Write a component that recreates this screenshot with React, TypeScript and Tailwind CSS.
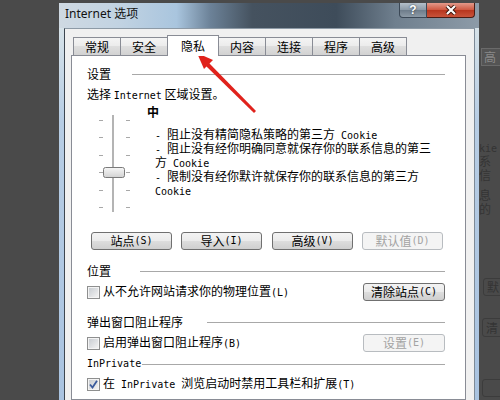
import React from "react";

const M = ({ children }: { children: React.ReactNode }) => (
  <span className="font-['DejaVu_Sans_Mono',monospace] text-[10px]">{children}</span>
);

const Btn = ({
  children,
  disabled,
  className,
}: {
  children: React.ReactNode;
  disabled?: boolean;
  className?: string;
}) => (
  <div
    className={`h-[18px] flex items-center justify-center rounded-[3px] border leading-[16px] ${
      disabled
        ? "border-[#b8bcc0] bg-[#f4f4f4] text-[#a3a3a3]"
        : "border-[#707070] bg-[linear-gradient(#f3f3f3_0%,#ebebeb_48%,#dddddd_52%,#cfcfcf_100%)] text-black"
    } ${className ?? ""}`}
  >
    {children}
  </div>
);

const Check = ({ checked }: { checked?: boolean }) => (
  <div className="w-[13px] h-[13px] border border-[#8e8f8f] bg-[#f4f4f4] p-[1px] shrink-0">
    <div className="relative w-full h-full bg-[linear-gradient(135deg,#c9cdd2,#f2f2f2)]">
      {checked && (
        <svg className="absolute inset-0" width="9" height="9" viewBox="0 0 9 9">
          <path d="M1 4.5 L3.5 7.5 L8 0.8" fill="none" stroke="#3a5a9c" strokeWidth="1.8" />
        </svg>
      )}
    </div>
  </div>
);

const Group = ({ label, lineClass }: { label: React.ReactNode; lineClass: string }) => (
  <div className="flex items-center h-[16px]">
    <span className="shrink-0">{label}</span>
    <div className={`flex-1 h-px bg-[#a8a8a8] ${lineClass}`} />
  </div>
);

const Tab = ({ label, first }: { label: string; first?: boolean }) => (
  <div
    className={`w-[48px] h-[18px] border border-b-0 border-[#898c95] bg-[linear-gradient(#f4f4f4_0%,#ececec_45%,#dedede_50%,#d2d2d2_100%)] flex items-center justify-center leading-[16px] ${
      first ? "" : "-ml-px"
    }`}
  >
    {label}
  </div>
);

const Slider = () => {
  const ticks = [16, 33, 51, 68, 86, 103];
  return (
    <svg width="34" height="112" viewBox="0 0 34 112" className="shrink-0 ml-[11px]">
      <rect x="14" y="11" width="2" height="97" fill="#b4b4b4" />
      <rect x="16" y="11" width="1" height="97" fill="#ffffff" />
      {ticks.map((t) => (
        <g key={t}>
          <rect x="1" y={t} width="4" height="1" fill="#a8a8a8" />
          <rect x="28" y={t} width="4" height="1" fill="#a8a8a8" />
        </g>
      ))}
      <defs>
        <linearGradient id="thumb" x1="0" y1="0" x2="0" y2="1">
          <stop offset="0" stopColor="#f7f7f7" />
          <stop offset="1" stopColor="#d2d2d2" />
        </linearGradient>
      </defs>
      <rect x="5.5" y="63.5" width="21" height="10" rx="2" fill="url(#thumb)" stroke="#7a7a7a" />
    </svg>
  );
};

export default function App() {
  return (
    <div className="relative w-[500px] h-[400px] overflow-hidden bg-[#4a4a4a] flex font-['Noto_Sans_CJK_SC',sans-serif] text-[12px] leading-[16px] text-black">
      <div className="w-[59px] shrink-0" />

      {/* Window */}
      <div className="w-[420px] shrink-0 mt-[3px] flex flex-col bg-[linear-gradient(#dfe8ea,#b7cde4_30%,#a9c3e0)]">
        {/* Title bar */}
        <div className="h-[25px] shrink-0 flex bg-[linear-gradient(to_right,#cfd9e2_0%,#c2d3e2_14%,#a9c5de_28%,#6c8298_36%,#45525f_46%,#3e4c5a_66%,#6f7f8e_80%,#8d9ba8_100%)]">
          <div className="pl-[6px] pt-[3px] h-[16px] font-['Noto_Sans','Noto_Sans_CJK_SC',sans-serif] text-[12px] text-[#111]">
            Internet 选项
          </div>
          <div className="ml-auto mr-[4px] flex h-[15px]">
            <div className="w-[28px] h-full rounded-bl-[4px] border border-t-0 border-[#3b4856] bg-[linear-gradient(#b4c0ca,#8b99a6_50%,#6e7d8b_52%,#8d9aa6)] flex items-center justify-center text-white font-bold text-[12px] leading-[12px] font-['Liberation_Sans',sans-serif] [text-shadow:0_0_2px_#1e2a36]">
              ?
            </div>
            <div className="w-[48px] h-full rounded-br-[4px] border border-t-0 border-l-0 border-[#4a1c14] bg-[linear-gradient(#e39a8a,#cf5a43_48%,#b8361e_52%,#c9533a)] flex items-center justify-center">
              <svg width="12" height="10" viewBox="0 0 12 10">
                <path d="M2 1 L10 9 M10 1 L2 9" stroke="#3a1208" strokeWidth="4" />
                <path d="M2 1 L10 9 M10 1 L2 9" stroke="#ffffff" strokeWidth="2.2" />
              </svg>
            </div>
          </div>
        </div>

        {/* Body row */}
        <div className="flex flex-1 min-h-0">
          <div className="w-[5px] shrink-0" />
          <div className="w-[411px] shrink-0 border-l border-t border-r border-l-[#3d4650] border-t-[#8d9aa6] border-r-[#7d8a97] bg-[#f0f0f0] pl-[6px] pt-[6px] flex flex-col">
            {/* Tabs */}
            <div className="flex items-end h-[20px] pl-[2px] shrink-0">
              <Tab label="常规" first />
              <Tab label="安全" />
              <div className="relative z-10 -ml-px -mb-px w-[52px] h-[21px] border border-b-0 border-[#898c95] bg-white flex items-center justify-center leading-[16px]">
                隐私
              </div>
              <Tab label="内容" />
              <Tab label="连接" />
              <Tab label="程序" />
              <Tab label="高级" />
            </div>

            {/* Panel */}
            <div className="w-[395px] flex-1 border border-[#898c95] bg-white pl-[15px] pr-[20px] pt-[10px] flex flex-col">
              <Group label="设置" lineClass="ml-[21px]" />
              <div className="mt-[4px] h-[16px]">
                选择 <M>Internet</M> 区域设置。
              </div>

              <div className="mt-[2px] h-[112px] flex">
                <Slider />
                <div className="ml-[15px] flex flex-col">
                  <div className="h-[16px] font-bold">中</div>
                  <div className="mt-[8px] ml-[8px] leading-[12px]">
                    <div>
                      <M>- </M>阻止没有精简隐私策略的第三方<M> Cookie</M>
                    </div>
                    <div>
                      <M>- </M>阻止没有经你明确同意就保存你的联系信息的第三
                    </div>
                    <div>
                      方<M> Cookie</M>
                    </div>
                    <div>
                      <M>- </M>限制没有经你默许就保存你的联系信息的第三方
                    </div>
                    <div>
                      <M>Cookie</M>
                    </div>
                  </div>
                </div>
              </div>

              <div className="mt-[16px] flex">
                <Btn className="ml-[4px] w-[81px]">
                  站点<M>(S)</M>
                </Btn>
                <Btn className="ml-[9px] w-[81px]">
                  导入<M>(I)</M>
                </Btn>
                <Btn className="ml-[10px] w-[81px]">
                  高级<M>(V)</M>
                </Btn>
                <Btn className="ml-[9px] w-[81px]" disabled>
                  默认值<M>(D)</M>
                </Btn>
              </div>

              <div className="mt-[13px]">
                <Group label="位置" lineClass="ml-[29px]" />
              </div>
              <div className="mt-[4px] h-[18px] flex items-center">
                <Check />
                <span className="ml-[3px]">
                  从不允许网站请求你的物理位置<M>(L)</M>
                </span>
                <Btn className="ml-auto w-[82px]">
                  清除站点<M>(C)</M>
                </Btn>
              </div>

              <div className="mt-[13px]">
                <Group label="弹出窗口阻止程序" lineClass="ml-[24px]" />
              </div>
              <div className="mt-[4px] h-[18px] flex items-center">
                <Check />
                <span className="ml-[3px]">
                  启用弹出窗口阻止程序<M>(B)</M>
                </span>
                <Btn className="ml-auto w-[82px]" disabled>
                  设置<M>(E)</M>
                </Btn>
              </div>

              <div className="mt-[3px]">
                <Group label={<M>InPrivate</M>} lineClass="ml-[1px] mt-[3px]" />
              </div>
              <div className="mt-[4px] h-[18px] flex items-center">
                <Check checked />
                <span className="ml-[3px]">
                  在<M> InPrivate </M>浏览启动时禁用工具栏和扩展<M>(T)</M>
                </span>
              </div>
            </div>
          </div>
          <div className="w-[4px] shrink-0" />
        </div>
      </div>

      {/* Ghost window remnants on the right */}
      <div className="flex-1 flex flex-col text-[#343434] overflow-hidden">
        <div className="mt-[48px] ml-[2px] w-[40px] h-[18px] border border-[#6a6a6a] bg-[#545454] text-[#8a8a8a] pl-[2px] leading-[16px]">
          高
        </div>
        <div className="mt-[76px] leading-[10px]">
          <M>kie</M>
        </div>
        <div className="leading-[14px]">系信</div>
        <div className="mt-[6px] leading-[14px]">息的</div>
        <div className="mt-[62px] ml-[4px] w-[40px] h-[18px] rounded-[3px] border border-[#3c3c3c] pl-[3px] leading-[16px]">
          默
        </div>
        <div className="mt-[22px] ml-[3px] w-[40px] h-[19px] rounded-[3px] border border-[#3c3c3c] pl-[3px] leading-[17px]">
          清
        </div>
        <div className="mt-[42px] ml-[3px] w-[40px] h-[18px] rounded-[3px] border border-[#3c3c3c]" />
      </div>

      {/* Red annotation arrow */}
      <svg className="absolute inset-0 pointer-events-none" width="500" height="400" viewBox="0 0 500 400">
        <polygon points="254,113 256,111 209,63 206,66" fill="#e0221c" />
        <polygon points="197,53 213,60 204,69" fill="#e0221c" />
      </svg>
    </div>
  );
}
